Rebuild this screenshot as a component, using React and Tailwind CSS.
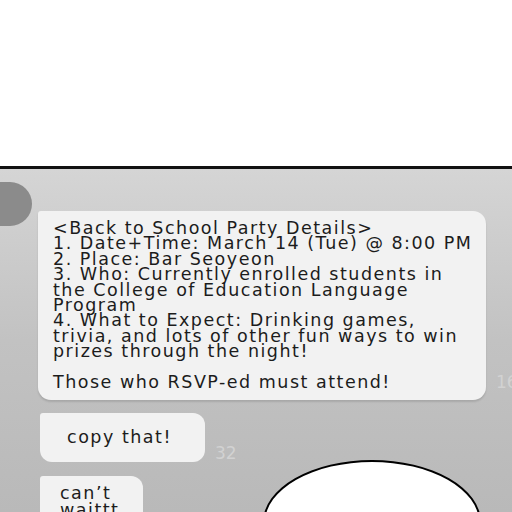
export default function App() {
  const font = { fontFamily: '"DejaVu Sans", "Noto Sans", sans-serif' };
  return (
    <div className="w-[512px] h-[512px] overflow-hidden relative bg-white" style={font}>
      <div className="h-[166px] bg-white" />
      <div className="h-[3px] bg-[#111]" />
      <div className="h-[343px] flex bg-gradient-to-b from-[#d5d5d5] via-[#c2c2c2] to-[#b9b9b9] relative">
        <div className="w-[38px] shrink-0 pt-[13px]">
          <div className="w-[32px] h-[44px] bg-[#8b8b8b] rounded-r-[22px]" />
        </div>
        <div className="flex flex-col pt-[42px]">
          <div className="flex items-end gap-[10px]">
            <div className="w-[448px] h-[189px] bg-[#f2f2f2] rounded-[13px] rounded-tl-[3px] pl-[15px] pt-[10px] text-[#1c1c1c] text-[17.5px] tracking-[1.5px] leading-[15.4px] shadow-[0_2px_2px_rgba(0,0,0,0.12)] whitespace-nowrap">
              <div>&lt;Back to School Party Details&gt;</div>
              <div>1. Date+Time: March 14 (Tue) @ 8:00 PM</div>
              <div>2. Place: Bar Seoyeon</div>
              <div>3. Who: Currently enrolled students in</div>
              <div>the College of Education Language</div>
              <div>Program</div>
              <div>4. What to Expect: Drinking games,</div>
              <div>trivia, and lots of other fun ways to win</div>
              <div>prizes through the night!</div>
              <div className="h-[15.4px]" />
              <div>Those who RSVP-ed must attend!</div>
            </div>
            <div className="text-[#d2d2d2] text-[17px] leading-[16px] pb-[10px] whitespace-nowrap">16</div>
          </div>
          <div className="flex items-end gap-[10px] mt-[13px] ml-[2px]">
            <div className="w-[165px] h-[49px] bg-[#f2f2f2] rounded-[12px] rounded-tl-[3px] flex items-center justify-center text-[#1c1c1c] text-[17.5px] tracking-[1.5px] pr-[6px]">
              copy that!
            </div>
            <div className="text-[#d2d2d2] text-[17px] leading-[16px] pb-[1px]">32</div>
          </div>
          <div className="flex items-end gap-[10px] mt-[14px] ml-[2px]">
            <div className="w-[103px] h-[56px] bg-[#f2f2f2] rounded-[12px] rounded-tl-[3px] pl-[20px] pt-[9px] text-[#1c1c1c] text-[17.5px] tracking-[1.5px] leading-[17px]">
              <div>can’t</div>
              <div>waittt</div>
            </div>
            <div className="text-[#d2d2d2] text-[17px] leading-[16px] -mb-[4px]">33</div>
          </div>
        </div>
        <div className="absolute left-[263px] top-[291px] w-[218px] h-[125px] rounded-[50%] bg-white border-2 border-black flex justify-center pt-[46px] pr-[10px]">
          <span className="text-[14px] text-black tracking-[1px]">SHOOT</span>
        </div>
      </div>
    </div>
  );
}
